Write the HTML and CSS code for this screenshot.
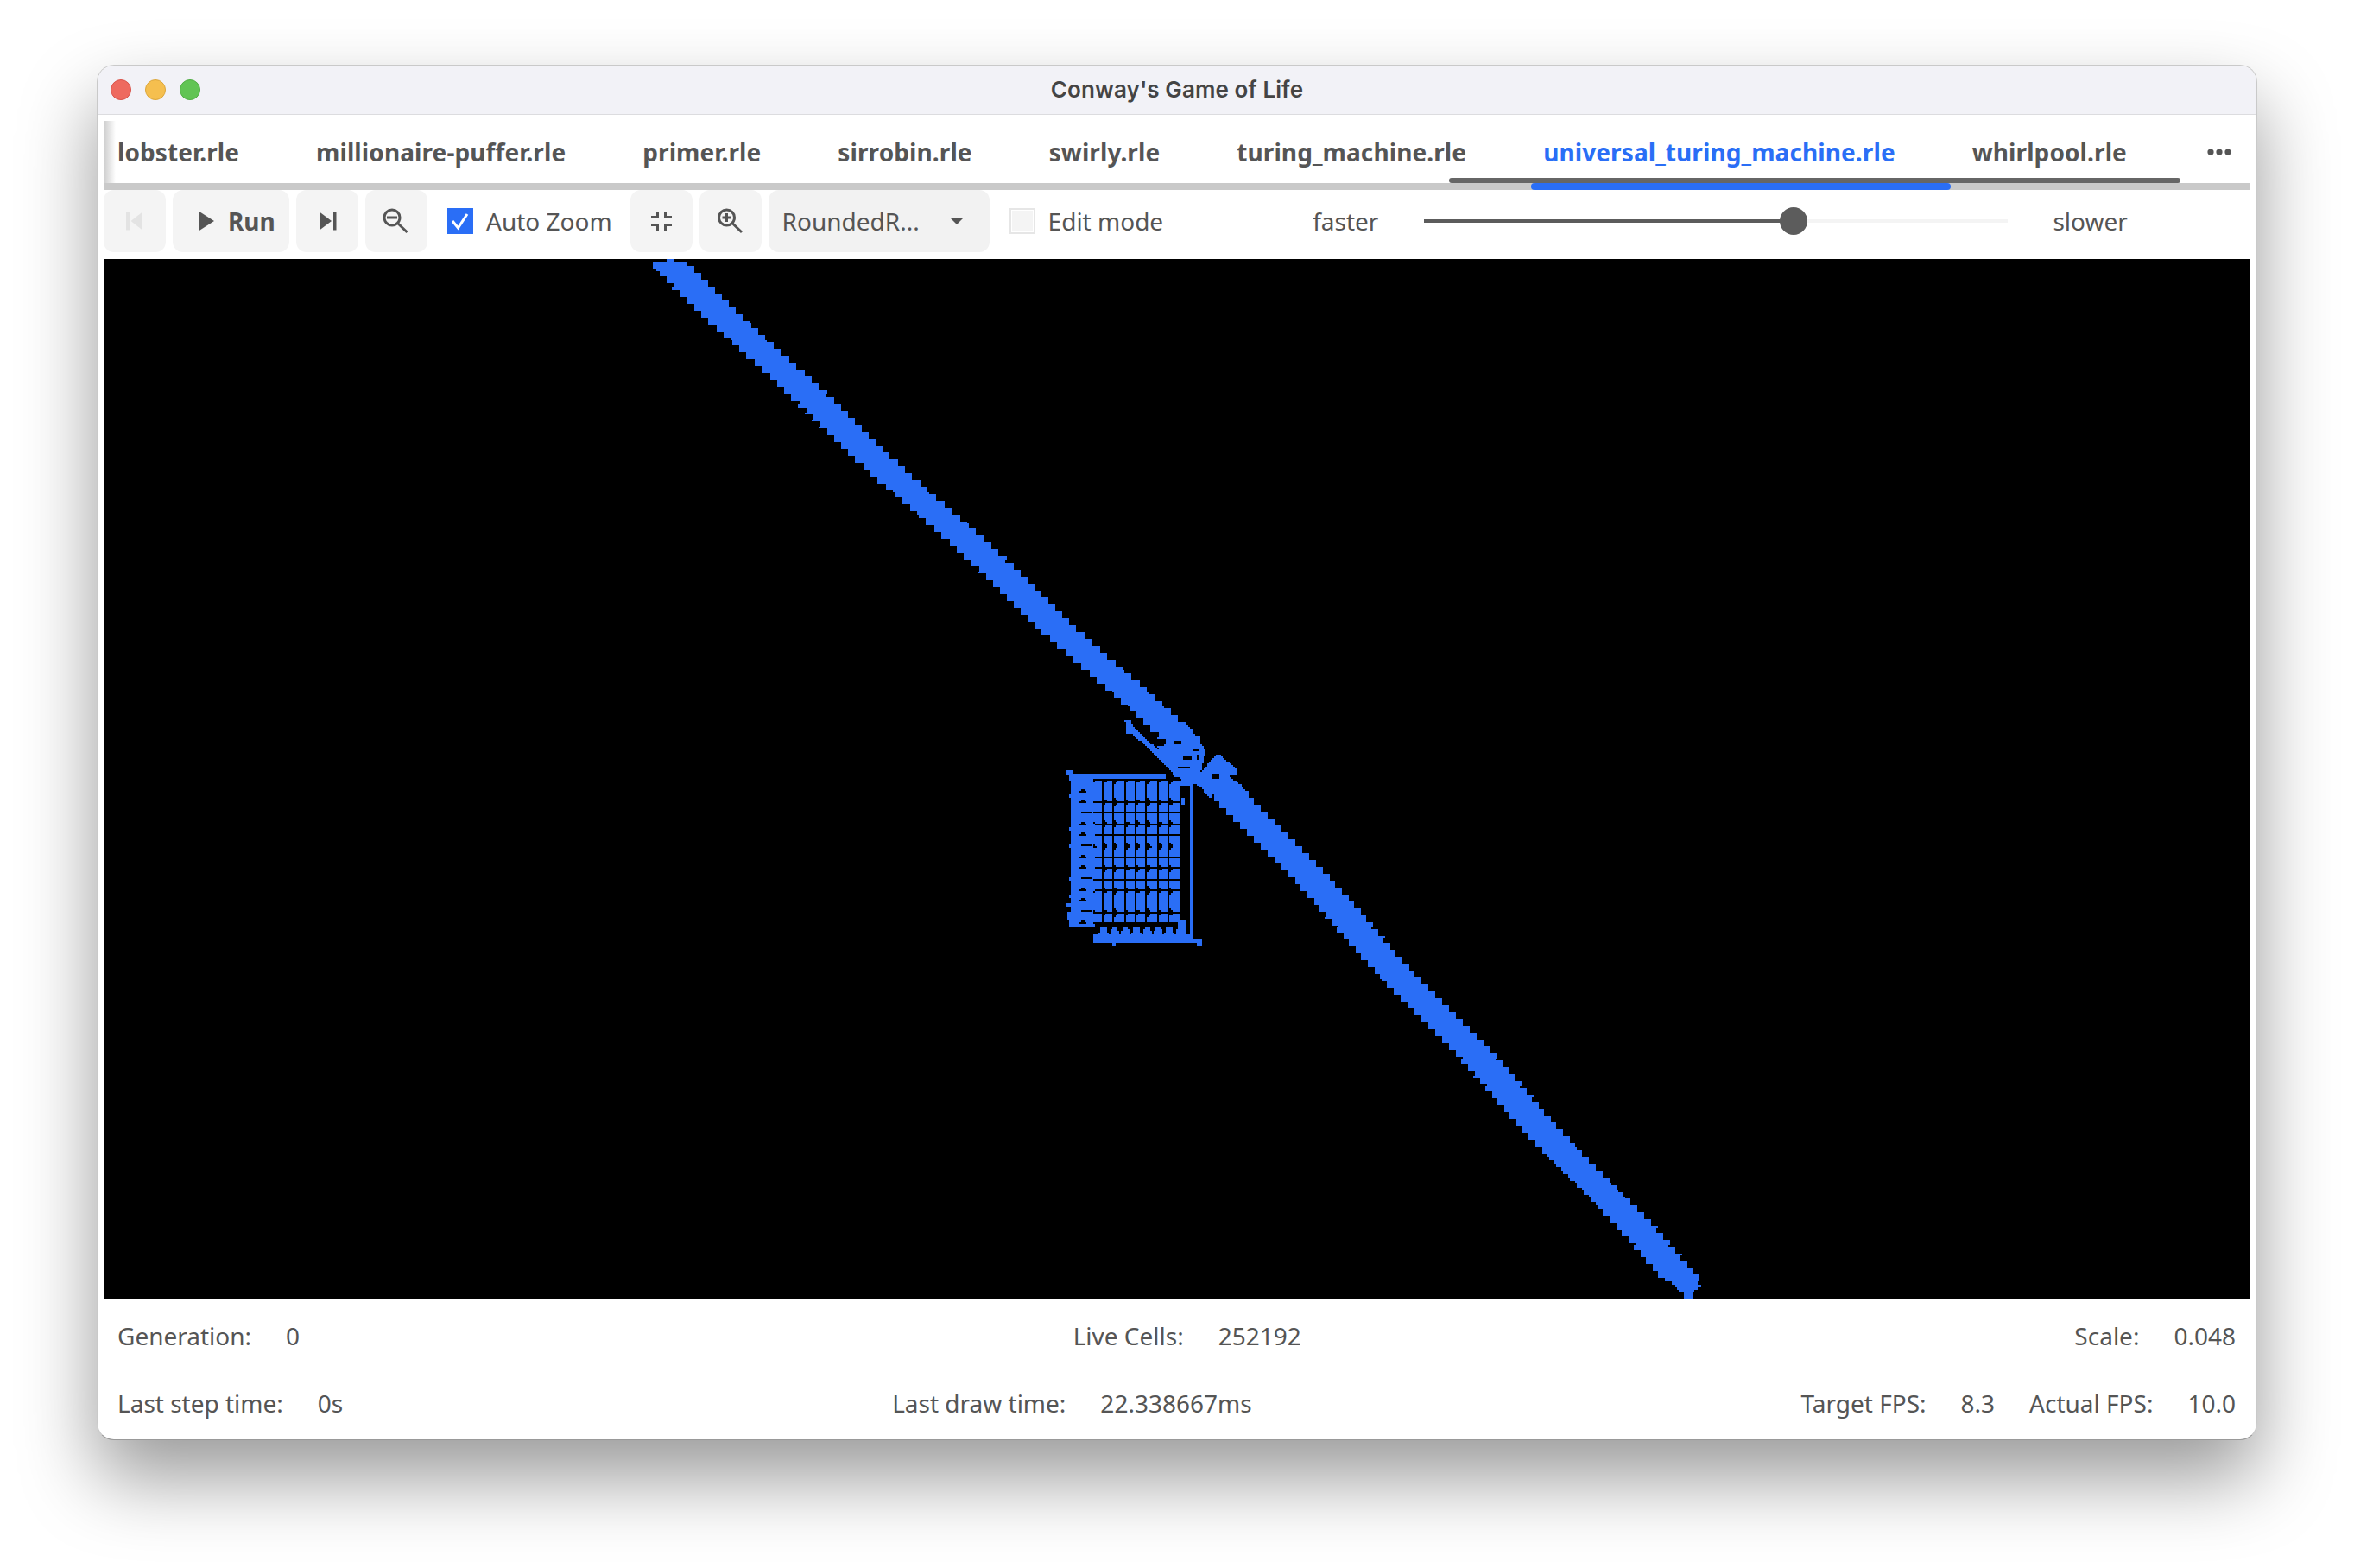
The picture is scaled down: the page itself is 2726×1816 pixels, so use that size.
FILE: index.html
```html
<!DOCTYPE html>
<html>
<head>
  <title>Conway's Game of Life</title>
  <link rel="stylesheet" href="styles.css">
</head>
<body>
  <div class="window">
    <div class="titlebar">
      <div class="lights">
        <span class="light red"></span>
        <span class="light yellow"></span>
        <span class="light green"></span>
      </div>
      <div class="title">Conway's Game of Life</div>
    </div>

    <div class="content">
      <div class="tabs">
        <div class="tab-row">
          <span class="tab">lobster.rle</span>
          <span class="tab">millionaire-puffer.rle</span>
          <span class="tab">primer.rle</span>
          <span class="tab">sirrobin.rle</span>
          <span class="tab">swirly.rle</span>
          <span class="tab">turing_machine.rle</span>
          <span class="tab active">universal_turing_machine.rle</span>
          <span class="tab">whirlpool.rle</span>
          <svg class="more" width="28" height="8" viewBox="0 0 28 8"><circle cx="4" cy="4" r="3.6"/><circle cx="14" cy="4" r="3.6"/><circle cx="24" cy="4" r="3.6"/></svg>
        </div>
        <div class="tab-fade"></div>
        <div class="tab-thumb"></div>
        <div class="tab-track"><div class="tab-indicator"></div></div>
      </div>

      <div class="toolbar">
        <button class="btn icon-btn">
          <svg class="disabled" width="24" height="24" viewBox="0 0 24 24"><rect x="2" y="1.5" width="4" height="21"/><path d="M21 1.5v21L7.5 12z"/></svg>
        </button>
        <button class="btn run-btn">
          <svg width="20" height="24" viewBox="0 0 20 24"><path d="M1 0.5v23L19 12z"/></svg>
          <span>Run</span>
        </button>
        <button class="btn icon-btn">
          <svg width="24" height="24" viewBox="0 0 24 24"><path d="M3 1.5v21L17 12z"/><rect x="19" y="1.5" width="3.5" height="21"/></svg>
        </button>
        <button class="btn icon-btn">
          <svg class="line" width="32" height="32" viewBox="0 0 32 32"><circle cx="11" cy="12" r="9"/><path d="M5 12h12M17.5 18.5l11 10.5"/></svg>
        </button>

        <label class="check first-check"><span class="box checked"><svg width="30" height="30" viewBox="0 0 30 30"><path d="M6 15l6.5 8L23 7"/></svg></span>Auto Zoom</label>

        <button class="btn icon-btn">
          <svg class="line" width="26" height="26" viewBox="0 0 26 26"><path d="M8.5 2v6.5H1M17.5 2v6.5H25M8.5 25v-7.5H1M17.5 25v-7.5H25"/></svg>
        </button>
        <button class="btn icon-btn">
          <svg class="line" width="32" height="32" viewBox="0 0 32 32"><circle cx="11.5" cy="12" r="9"/><path d="M6.5 12h10M11.5 7v10M18 18.5l11 10.5"/></svg>
        </button>
        <div class="btn select">
          <span>RoundedR...</span>
          <svg width="16" height="8" viewBox="0 0 16 8"><path d="M0 0h16L8 8z"/></svg>
        </div>

        <label class="check second-check"><span class="box"></span>Edit mode</label>

        <div class="speed">
          <span>faster</span>
          <div class="slider">
            <div class="slider-fill"></div>
            <div class="slider-thumb"></div>
          </div>
          <span>slower</span>
        </div>
      </div>

      <canvas id="board" width="2486" height="1204"></canvas>

      <div class="status">
        <div class="stat-row">
          <div class="stat"><span>Generation:</span><span>0</span></div>
          <div class="stat"><span>Live Cells:</span><span>252192</span></div>
          <div class="stat"><span>Scale:</span><span>0.048</span></div>
        </div>
        <div class="stat-row">
          <div class="stat"><span>Last step time:</span><span>0s</span></div>
          <div class="stat"><span>Last draw time:</span><span>22.338667ms</span></div>
          <div class="stat">
            <span>Target FPS:</span><span>8.3</span>
            <span>Actual FPS:</span><span>10.0</span>
          </div>
        </div>
      </div>
    </div>
  </div>

  <script src="game.js"></script>
</body>
</html>
```

FILE: styles.css
```css
html, body {
  margin: 0;
  padding: 0;
  height: 100%;
  overflow: hidden;
  background-color: #fff;
}

body {
  padding: 75px 112px 0;
  box-sizing: border-box;
  font-family: "Noto Sans", sans-serif;
  font-size: 28px;
  color: #555;
}

.window {
  height: 1593px;
  box-sizing: border-box;
  border: 1px solid #c9c9c9;
  border-bottom-color: #999;
  border-radius: 20px;
  background-color: #fff;
  box-shadow: 0 44px 88px rgba(0, 0, 0, 0.4);
}

.titlebar {
  display: flex;
  align-items: center;
  justify-content: center;
  position: relative;
  height: 56px;
  border-bottom: 1px solid #dcdcdf;
  border-radius: 19px 19px 0 0;
  background-color: #f2f2f7;
}

.lights {
  position: absolute;
  left: 15px;
  top: 16px;
  display: flex;
  gap: 16px;
}

.light {
  width: 24px;
  height: 24px;
  box-sizing: border-box;
  border-radius: 50%;
  border: 1px solid;
}

.red { background-color: #ee6a5f; border-color: #d9534a; }
.yellow { background-color: #f5bf4f; border-color: #dca63a; }
.green { background-color: #61c454; border-color: #50ad44; }

.title {
  padding-bottom: 2px;
  font-family: Inter, sans-serif;
  font-size: 26px;
  font-weight: 600;
  letter-spacing: 0.1px;
  color: #444;
}

.content {
  padding: 7px 7px 0;
}

/* tabs */
.tabs {
  position: relative;
}

.tab-row {
  display: flex;
  align-items: center;
  gap: 89px;
  height: 72px;
  padding-left: 16px;
}

.tab {
  font-weight: 700;
  letter-spacing: 0.1px;
  white-space: nowrap;
}

.tab.active {
  color: #2a6ef6;
}

.more {
  position: absolute;
  right: 22px;
  top: 32px;
  fill: #555;
}

.tab-fade {
  position: absolute;
  left: 0;
  top: 0;
  width: 14px;
  height: 72px;
  background: linear-gradient(to right, #ccc, #fff);
}

.tab-thumb {
  position: absolute;
  left: 1558px;
  top: 66px;
  width: 847px;
  height: 6px;
  border-radius: 3px;
  background-color: #666;
}

.tab-track {
  position: relative;
  height: 8px;
  background-color: #c9c9c9;
}

.tab-indicator {
  position: absolute;
  left: 1653px;
  top: 0;
  width: 486px;
  height: 8px;
  border-radius: 4px;
  background-color: #2a6ef6;
}

/* toolbar */
.toolbar {
  display: flex;
  align-items: center;
  gap: 8px;
  height: 72px;
  margin-bottom: 8px;
}

.btn {
  display: flex;
  align-items: center;
  justify-content: center;
  height: 72px;
  padding: 0;
  border: none;
  border-radius: 12px;
  background-color: #f4f4f4;
  font-family: inherit;
  font-size: 28px;
  color: #555;
}

.btn svg {
  fill: #555;
}

.btn svg.disabled {
  fill: #e3e3e3;
}

.btn svg.line {
  fill: none;
  stroke: #555;
  stroke-width: 3;
}

.icon-btn {
  width: 72px;
}

.run-btn {
  width: 135px;
  justify-content: flex-start;
  gap: 15px;
  padding-left: 29px;
  box-sizing: border-box;
  font-weight: 700;
}

.select {
  width: 256px;
  justify-content: flex-start;
  padding-left: 16px;
  box-sizing: border-box;
  background-color: #f2f2f2;
}

.select svg {
  margin-left: 35px;
}

.check {
  display: flex;
  align-items: center;
  gap: 15px;
}

.first-check {
  margin: 0 13px 0 15px;
}

.second-check {
  margin-left: 15px;
}

.box {
  display: block;
  width: 30px;
  height: 30px;
  box-sizing: border-box;
  border: 2px solid #e6e6e6;
  background-color: #f4f4f4;
  box-shadow: inset 0 0 0 1px #fff;
}

.box.checked {
  border: none;
  box-shadow: none;
  background-color: #2a6ef6;
}

.box svg {
  display: block;
  fill: none;
  stroke: #fff;
  stroke-width: 3;
}

.speed {
  display: flex;
  align-items: center;
  gap: 52px;
  margin-left: 165px;
}

.slider {
  position: relative;
  width: 676px;
  height: 4px;
  margin-left: 1px;
  background-color: #f4f4f4;
}

.slider-fill {
  width: 428px;
  height: 4px;
  background-color: #5c5c5c;
}

.slider-thumb {
  position: absolute;
  left: 412px;
  top: -14px;
  width: 32px;
  height: 32px;
  border-radius: 50%;
  background-color: #5c5c5c;
}

#board {
  display: block;
  background-color: #000;
}

/* bottom stats */
.status {
  padding: 4px 17px 0 16px;
}

.stat-row {
  display: flex;
  align-items: center;
  justify-content: space-between;
  height: 78px;
}

.stat {
  display: flex;
  gap: 40px;
}
```

FILE: game.js
```js
var canvas = document.getElementById("board");
var ctx = canvas.getContext("2d");
var CELL = 2; // 1 pixel of the simulated grid on screen

ctx.fillStyle = "#2a6ef6";

function rect(x, y, w, h) {
  ctx.fillRect(x - 120, y - 300, w, h);
}

function snap(v, step) {
  return Math.round(v / step) * step;
}

function interp(points, y) {
  for (var i = 1; i < points.length; i++) {
    if (y <= points[i][0] || i == points.length - 1) {
      var a = points[i - 1], b = points[i];
      return a[1] + (y - a[0]) * (b[1] - a[1]) / (b[0] - a[0]);
    }
  }
}

// glider stream, stair stepped like the real thing
function band(points, y0, y1, width) {
  for (var y = y0; y < y1; y += CELL) {
    var stepL = Math.floor(y / 8) * 8;
    var stepR = Math.floor((y + 4) / 8) * 8;
    var wob = 2.5 * Math.sin(y / 31);
    var left = snap(interp(points, stepL + 4) - width / 2 + wob, CELL);
    var right = snap(interp(points, stepR + 4) + width / 2 + wob, CELL);
    rect(left, y, right - left, CELL);
  }
}

// the zoom coordinates below are 3x around (1200, 800)
function zx(v) { return 1200 + v / 3; }
function zy(v) { return 800 + v / 3; }

function inside(pts, x, y) {
  var hit = false;
  for (var i = 0, j = pts.length - 1; i < pts.length; j = i++) {
    var a = pts[i], b = pts[j];
    if ((a[1] > y) != (b[1] > y) && x < (b[0] - a[0]) * (y - a[1]) / (b[1] - a[1]) + a[0]) {
      hit = !hit;
    }
  }
  return hit;
}

function poly(pts) {
  var xs = pts.map(function (p) { return p[0]; });
  var ys = pts.map(function (p) { return p[1]; });
  var x0 = snap(zx(Math.min.apply(null, xs)), CELL) - CELL, x1 = zx(Math.max.apply(null, xs));
  var y0 = snap(zy(Math.min.apply(null, ys)), CELL) - CELL, y1 = zy(Math.max.apply(null, ys));
  for (var y = y0; y < y1; y += CELL) {
    for (var x = x0; x < x1; x += CELL) {
      if (inside(pts, (x + 1 - 1200) * 3, (y + 1 - 800) * 3)) rect(x, y, CELL, CELL);
    }
  }
}

function zrect(x, y, w, h) {
  rect(snap(zx(x), CELL), snap(zy(y), CELL), snap(w / 3, CELL), snap(h / 3, CELL));
}

function hole(x, y, w, h) {
  ctx.fillStyle = "#000";
  zrect(x, y, w, h);
  ctx.fillStyle = "#2a6ef6";
}

// upper stream
rect(772, 300, 8, 4);
rect(758, 306, 6, 4);
rect(760, 310, 6, 4);
band([[313, 782], [413, 884], [800, 1303], [860, 1368]], 304, 860, 40);

// lower stream
band([[904, 1409], [1107, 1598], [1480, 1945]], 904, 1484, 40);
rect(1936, 1484, 30, 4);
rect(1940, 1488, 30, 3);
rect(1942, 1491, 24, 3);
rect(1944, 1494, 18, 2);
rect(1950, 1496, 10, 8);

// head of the upper stream
poly([[498, 110], [520, 110], [570, 180], [592, 212], [560, 240], [520, 300], [480, 300], [440, 195]]);
hole(482, 176, 22, 12);

// thin arm
poly([[306, 102], [330, 102], [338, 128], [505, 280], [490, 298], [335, 150], [312, 148], [315, 120]]);

// junction
poly([[420, 195], [500, 190], [590, 210], [570, 290], [560, 322], [520, 322], [480, 290]]);
hole(510, 228, 30, 10);
hole(490, 264, 40, 6);
hole(546, 204, 18, 6);
hole(556, 222, 8, 18);

// head of the lower stream
poly([[575, 280], [625, 222], [640, 225], [695, 270], [695, 295], [672, 295], [725, 345], [650, 372], [615, 345], [615, 378], [590, 360], [575, 335], [555, 330]]);
hole(612, 290, 24, 18);

// the tape, top edge and solid left side
zrect(102, 276, 24, 18);
zrect(114, 288, 336, 18);
for (var i = 0; i < 45; i++) {
  var jag = i % 3 == 1 ? 6 : (i % 5 == 0 ? 0 : 3);
  zrect(114 + jag, 300 + i * 11.6, 84 - jag, 12);
}
zrect(102, 738, 24, 12);
zrect(108, 770, 30, 30);
zrect(114, 800, 24, 22);

// notches in the solid side
for (var n = 0; n < 13; n++) {
  var ny = 340 + n * 38.2;
  if (n % 3 == 2) {
    hole(154, ny + 4, 36, 5);
  } else {
    hole(154, ny, 14, 5);
    hole(148, ny + 5, 22, 5);
  }
}

// memory cells
var cols = [194, 233, 271, 310, 347, 386, 424, 462];
for (var r = 0; r < 13; r++) {
  var cy = 312 + r * 38.4;
  for (var c = 0; c < cols.length; c++) {
    var cx = cols[c];
    if (r % 2 == 0) {
      poly([[cx + 14, cy], [cx + 34, cy], [cx + 34, cy + 34], [cx, cy + 34], [cx, cy + 12]]);
    } else {
      poly([[cx, cy], [cx + 34, cy], [cx + 34, cy + 34], [cx + 14, cy + 34], [cx, cy + 22]]);
    }
  }
}

// right rail and bottom row
poly([[462, 330], [490, 310], [540, 310], [540, 330], [500, 330], [480, 345]]);
zrect(534, 320, 12, 560);
zrect(504, 372, 12, 24);
zrect(198, 846, 336, 30);
zrect(546, 864, 30, 12);
zrect(555, 876, 15, 12);
zrect(264, 876, 12, 12);
zrect(492, 795, 30, 51);
for (var b = 0; b < 8; b++) {
  poly([[218 + b * 38, 846], [224 + b * 38, 824], [244 + b * 38, 824], [250 + b * 38, 846]]);
}
```
